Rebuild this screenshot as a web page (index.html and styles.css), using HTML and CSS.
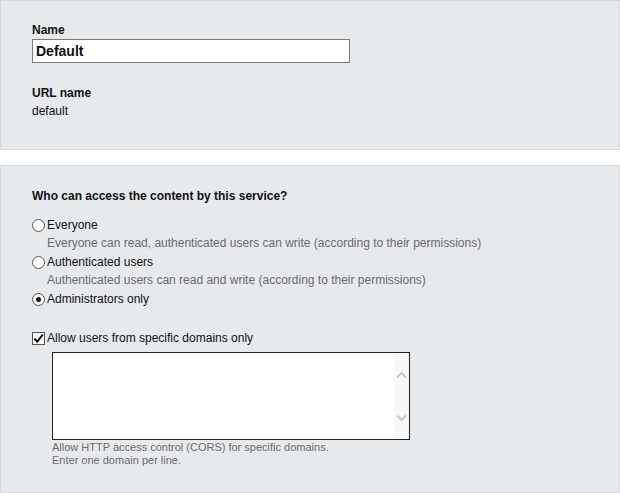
FILE: index.html
```html
<!DOCTYPE html>
<html>
<head>
<meta charset="utf-8">
<link rel="stylesheet" href="styles.css">
</head>
<body>
<section class="panel panel-top">
  <div class="field">
    <div class="label">Name</div>
    <input class="text-input" type="text" value="Default">
  </div>
  <div class="field field-url">
    <div class="label">URL name</div>
    <div class="value">default</div>
  </div>
</section>
<section class="panel panel-access">
  <div class="question">Who can access the content by this service?</div>
  <div class="options">
    <label class="option"><span class="radio"></span>Everyone</label>
    <div class="desc">Everyone can read, authenticated users can write (according to their permissions)</div>
    <label class="option"><span class="radio"></span>Authenticated users</label>
    <div class="desc">Authenticated users can read and write (according to their permissions)</div>
    <label class="option"><span class="radio checked"></span>Administrators only</label>
  </div>
  <label class="option check-option"><span class="checkbox"><svg width="13" height="13" viewBox="0 0 13 13"><path d="M2.5 6.5 L5.2 9.6 L10.8 2.6" fill="none" stroke="#111" stroke-width="2"/></svg></span>Allow users from specific domains only</label>
  <div class="domains">
    <div class="area-wrap">
      <textarea class="area"></textarea>
      <div class="scroll">
        <svg width="13" height="10" viewBox="0 0 13 10"><path d="M2 7.5 L6.5 3 L11 7.5" fill="none" stroke="#c4c4c4" stroke-width="1.8"/></svg>
        <svg width="13" height="10" viewBox="0 0 13 10"><path d="M2 2.5 L6.5 7 L11 2.5" fill="none" stroke="#c4c4c4" stroke-width="1.8"/></svg>
      </div>
    </div>
    <div class="help">Allow HTTP access control (CORS) for specific domains.<br>Enter one domain per line.</div>
  </div>
</section>
</body>
</html>
```
FILE: styles.css
```css
html, body { margin: 0; padding: 0; background: #fff; }
body { font-family: "Liberation Sans", Arial, sans-serif; font-size: 12px; color: #111; }
.panel { background: #e7eaed; border: 1px solid #d9d9d9; box-sizing: border-box; width: 620px; }
.panel-top { height: 150px; padding: 22px 31px 0; }
.label { font-weight: bold; line-height: 14px; }
.text-input { display: block; margin-top: 2px; width: 318px; height: 24px; box-sizing: border-box; border: 1px solid #7a7a7a; background: #fff; font-family: inherit; font-size: 14px; font-weight: bold; padding: 0 3px; color: #111; outline: none; }
.field-url { margin-top: 23px; }
.value { margin-top: 4px; line-height: 14px; }
.panel-access { margin-top: 15px; height: 328px; padding: 23px 31px 0; }
.question { font-weight: bold; line-height: 14px; margin-bottom: 13px; }
.options { display: flex; flex-direction: column; }
.option { display: flex; align-items: center; height: 18px; line-height: 14px; }
.radio { width: 11px; height: 11px; border: 1px solid #555; border-radius: 50%; background: #fff; margin-right: 2px; position: relative; flex: none; }
.radio.checked::after { content: ""; position: absolute; left: 3px; top: 3px; width: 5px; height: 5px; border-radius: 50%; background: #111; }
.desc { color: #6b6b6b; padding-left: 15px; line-height: 14px; margin: 2px 0 3px; }
.check-option { margin-top: 21px; }
.checkbox { width: 13px; height: 13px; box-sizing: border-box; border: 1px solid #555; background: #fff; margin-right: 2px; flex: none; display: flex; }
.checkbox svg { margin: -1px; }
.domains { padding-left: 20px; margin-top: 5px; }
.area-wrap { width: 358px; height: 88px; box-sizing: border-box; border: 1px solid #222; background: #fff; display: flex; }
.area { flex: 1; border: none; resize: none; outline: none; margin: 0; padding: 2px; font-family: inherit; }
.scroll { width: 15px; background: #f7f7f7; display: flex; flex-direction: column; justify-content: space-between; align-items: center; padding: 17px 0 16px; box-sizing: border-box; }
.help { font-size: 11px; color: #6b6b6b; line-height: 13px; margin-top: 1px; }
```
